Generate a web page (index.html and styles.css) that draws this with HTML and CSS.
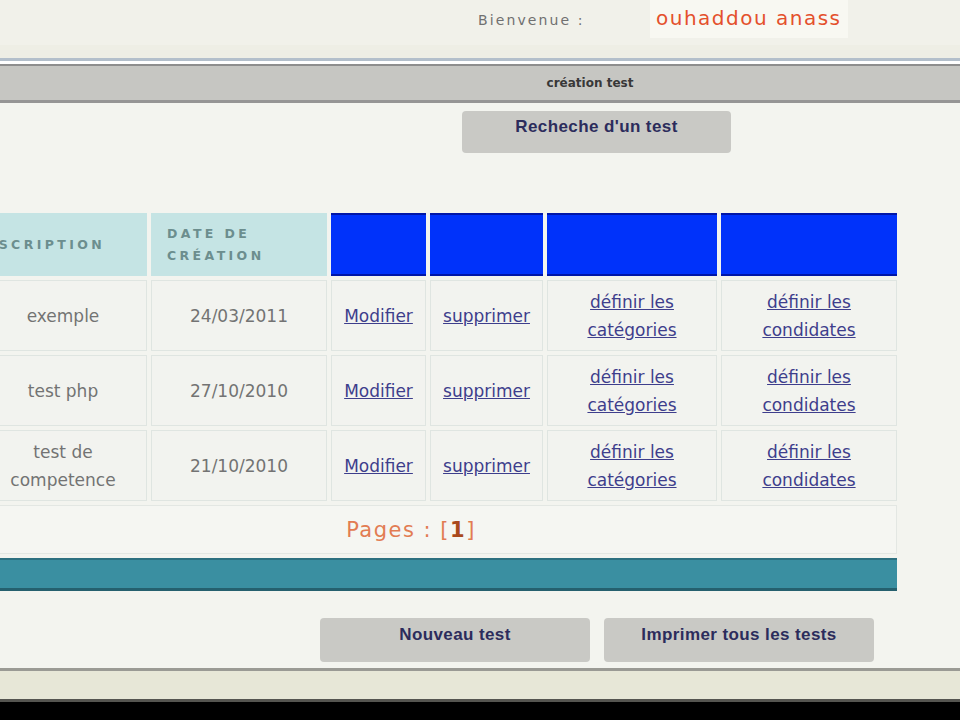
FILE: index.html
```html
<!DOCTYPE html>
<html lang="fr">
<head>
<meta charset="utf-8">
<title>création test</title>
<link rel="stylesheet" href="styles.css">
</head>
<body>
<div class="page">
  <div class="top">
    <span class="welcome">Bienvenue :</span>
    <span class="user">ouhaddou anass</span>
  </div>
  <div class="band"></div>
  <div class="titlebar">création test</div>
  <div class="search-row">
    <button class="btn btn-search">Recheche d'un test</button>
  </div>
  <table class="grid">
    <thead>
      <tr>
        <th class="h-desc">DESCRIPTION</th>
        <th class="h-date">DATE DE<br>CRÉATION</th>
        <th class="h-blue c3"></th>
        <th class="h-blue c4"></th>
        <th class="h-blue c5"></th>
        <th class="h-blue c6"></th>
      </tr>
    </thead>
    <tbody>
      <tr>
        <td>exemple</td>
        <td>24/03/2011</td>
        <td><a href="#">Modifier</a></td>
        <td><a href="#">supprimer</a></td>
        <td><a href="#">définir les<br>catégories</a></td>
        <td><a href="#">définir les<br>condidates</a></td>
      </tr>
      <tr>
        <td>test php</td>
        <td>27/10/2010</td>
        <td><a href="#">Modifier</a></td>
        <td><a href="#">supprimer</a></td>
        <td><a href="#">définir les<br>catégories</a></td>
        <td><a href="#">définir les<br>condidates</a></td>
      </tr>
      <tr>
        <td>test de<br>competence</td>
        <td>21/10/2010</td>
        <td><a href="#">Modifier</a></td>
        <td><a href="#">supprimer</a></td>
        <td><a href="#">définir les<br>catégories</a></td>
        <td><a href="#">définir les<br>condidates</a></td>
      </tr>
    </tbody>
    <tfoot>
      <tr>
        <td class="pages" colspan="6">Pages : [<b>1</b>]</td>
      </tr>
      <tr>
        <td class="tealbar" colspan="6"></td>
      </tr>
    </tfoot>
  </table>
  <div class="actions">
    <button class="btn btn-action">Nouveau test</button>
    <button class="btn btn-action">Imprimer tous les tests</button>
  </div>
  <div class="footer"></div>
  <div class="black"></div>
</div>
</body>
</html>
```

FILE: styles.css
```css
html, body {
  margin: 0;
  padding: 0;
  background: #000;
  overflow: hidden;
}
.page {
  width: 960px;
  background: #f3f4ef;
  font-family: "DejaVu Sans", Verdana, sans-serif;
  overflow: hidden;
}
.top {
  height: 45px;
  background: #f1f1ea;
  display: flex;
  align-items: flex-start;
  padding-left: 478px;
}
.welcome {
  font-size: 14px;
  letter-spacing: 2.1px;
  color: #707070;
  margin-top: 12px;
  width: 172px;
}
.user {
  background: #f8f8f2;
  color: #e4502c;
  font-size: 20px;
  letter-spacing: 1.5px;
  height: 38px;
  line-height: 36px;
  padding: 0 6px;
  width: 186px;
}
.band {
  height: 13px;
  background: #eeeee5;
  border-bottom: 3px solid #b3bfcb;
}
.titlebar {
  height: 39px;
  line-height: 39px;
  background: #c6c6c2;
  border-top: 3px solid #fff;
  box-shadow: inset 0 2px 0 #8e8e8e, inset 0 -3px 0 #959595;
  text-align: center;
  padding-left: 220px;
  font-size: 12px;
  font-weight: bold;
  color: #383838;
}
.search-row {
  padding: 8px 0 0 462px;
  height: 106px;
  box-sizing: border-box;
}
.btn {
  background: #c9c9c5;
  border: none;
  border-radius: 4px;
  font-family: "Liberation Sans", Arial, sans-serif;
  font-weight: bold;
  font-size: 17px;
  letter-spacing: 0.4px;
  line-height: 20px;
  color: #2c2c5c;
  box-sizing: border-box;
  display: block;
  text-align: center;
}
.btn-search {
  width: 269px;
  height: 42px;
  padding: 6px 0 16px;
}
.grid {
  margin-left: -25px;
  border-collapse: separate;
  border-spacing: 4px 4px;
}
.grid th {
  height: 63px;
  padding: 0;
  box-sizing: border-box;
}
.grid .h-desc, .grid .h-date {
  background: #c5e4e4;
  color: #6c8e8e;
  font-size: 12.5px;
  font-weight: bold;
  letter-spacing: 3.4px;
  text-align: left;
  line-height: 22px;
}
.grid .h-desc {
  width: 168px;
  padding-left: 0;
  text-indent: -6px;
}
.grid .h-date {
  width: 176px;
  padding-left: 16px;
}
.h-blue {
  background: #0032fa;
  border-top: 2px solid #0016a8;
  border-bottom: 2px solid #0016a8;
}
.c3 { width: 95px; }
.c4 { width: 113px; }
.c5 { width: 170px; }
.c6 { width: 176px; }
.grid td {
  background: #f2f3ef;
  border: 1px solid #dfe5e1;
  height: 71px;
  box-sizing: border-box;
  text-align: center;
  vertical-align: middle;
  font-size: 17px;
  color: #737373;
  line-height: 28px;
  padding: 0;
}
.grid td a {
  color: #3e3e8c;
  text-decoration: underline;
}
.grid td.pages {
  height: 49px;
  background: #f5f6f2;
  font-size: 21px;
  color: #e27c52;
  letter-spacing: 1.5px;
  text-align: center;
  padding-right: 54px;
  border-color: #e3e7e3;
}
.pages b {
  color: #a9491c;
}
.grid td.tealbar {
  height: 33px;
  background: #3a8fa1;
  border: none;
  border-top: 2px solid #2d7080;
  border-bottom: 3px solid #25606e;
}
.actions {
  display: flex;
  gap: 14px;
  padding-left: 320px;
  margin-top: 23px;
  height: 50px;
}
.btn-action {
  width: 270px;
  height: 44px;
  padding: 7px 0 17px;
}
.footer {
  height: 28px;
  background: #e7e7d7;
  border-top: 3px solid #9a9a94;
  border-bottom: 3px solid #555550;
}
.black {
  height: 30px;
  background: #000;
}
```
